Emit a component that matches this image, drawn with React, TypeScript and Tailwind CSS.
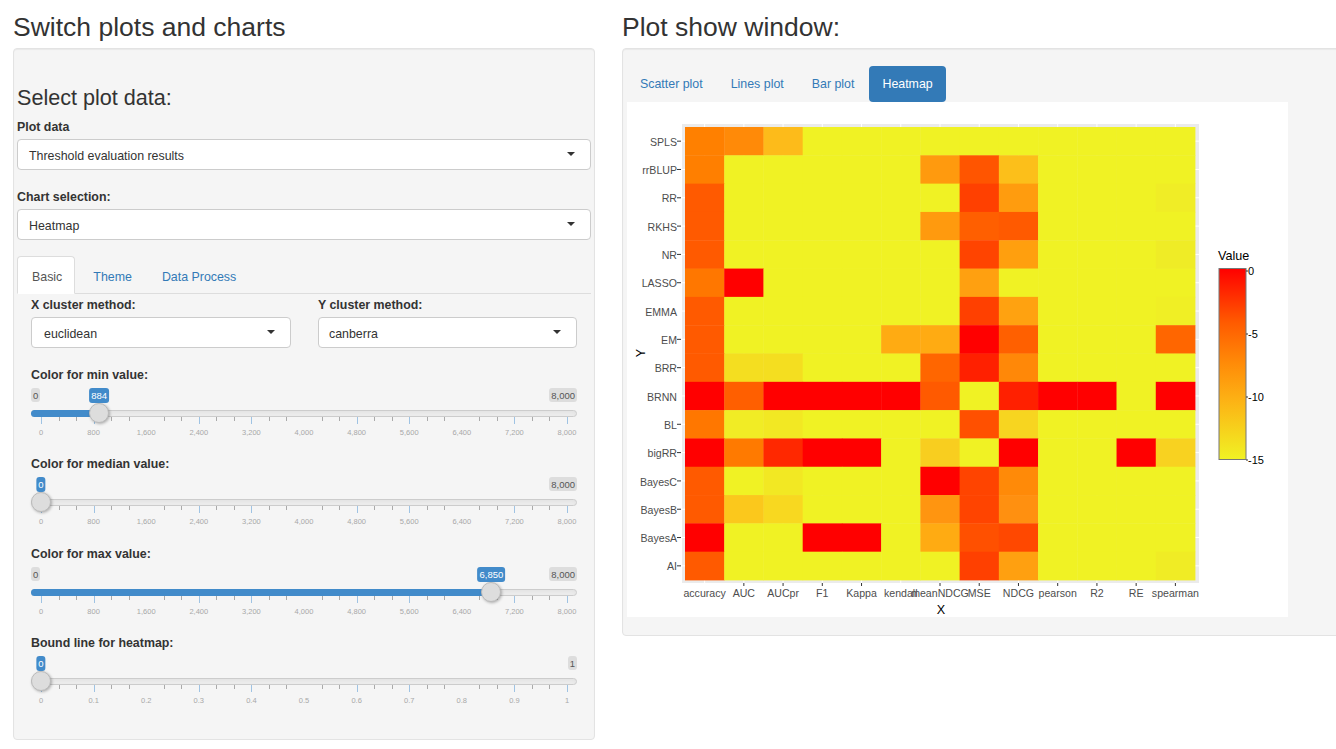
const Y = '#f0f224';
const R = '#ff0000';
const A = '#ff5a00';

const xLabels = ['accuracy', 'AUC', 'AUCpr', 'F1', 'Kappa', 'kendall', 'meanNDCG', 'MSE', 'NDCG', 'pearson', 'R2', 'RE', 'spearman'];

// one row per method, top to bottom; a cell not listed is the yellow base colour
const rows: { name: string; tick: boolean; cells: Record<number, string> }[] = [
  { name: 'SPLS', tick: true, cells: { 0: '#ff8000', 1: '#ff8a08', 2: '#fdbb1a' } },
  { name: 'rrBLUP', tick: true, cells: { 0: '#ff7f00', 6: '#ff9a0e', 7: '#ff5500', 8: '#fcbf1a' } },
  { name: 'RR', tick: true, cells: { 0: A, 7: '#ff4000', 8: '#ff9c0e', 12: '#f0ed26' } },
  { name: 'RKHS', tick: true, cells: { 0: A, 6: '#ff9a0e', 7: '#ff5f00', 8: A } },
  { name: 'NR', tick: true, cells: { 0: A, 7: '#ff4400', 8: '#ff9f0e', 12: '#efec26' } },
  { name: 'LASSO', tick: true, cells: { 0: '#ff7700', 1: R, 7: '#ffa010' } },
  { name: 'EMMA', tick: false, cells: { 0: A, 7: '#ff4000', 8: '#ffa210', 12: '#f0ef25' } },
  { name: 'EM', tick: true, cells: { 0: A, 5: '#ffab12', 6: '#ffab12', 7: R, 8: '#ff6000', 12: '#ff6600' } },
  { name: 'BRR', tick: true, cells: { 0: A, 1: '#f4de20', 2: '#f4de20', 6: '#ff6600', 7: '#ff2000', 8: '#ff8808' } },
  { name: 'BRNN', tick: false, cells: { 0: R, 1: '#ff5f00', 2: R, 3: R, 4: R, 5: R, 6: A, 8: '#ff2000', 9: R, 10: R, 12: R } },
  { name: 'BL', tick: true, cells: { 0: '#ff7700', 1: '#f1ec25', 2: '#f2e823', 7: '#ff5000', 8: '#f7d520' } },
  { name: 'bigRR', tick: true, cells: { 0: R, 1: '#ff7a00', 2: '#ff2800', 3: R, 4: R, 6: '#f8ce1f', 8: R, 11: R, 12: '#f8d220' } },
  { name: 'BayesC', tick: true, cells: { 0: A, 2: '#f2e823', 6: R, 7: '#ff4400', 8: '#ff8a08' } },
  { name: 'BayesB', tick: true, cells: { 0: A, 1: '#fbc81c', 2: '#f8d820', 6: '#ff9510', 7: '#ff4400', 8: '#ff9010' } },
  { name: 'BayesA', tick: true, cells: { 0: R, 3: R, 4: R, 6: '#ffab12', 7: '#ff5000', 8: '#ff4800' } },
  { name: 'AI', tick: true, cells: { 0: A, 7: '#ff4000', 8: '#ffa010', 12: '#f0ec25' } },
];

const left = 685;
const top = 127;
const colW = 510 / 13;
const rowH = 453 / 16;

function Heatmap() {
  return (
    <svg width={661} height={515} viewBox="627 102 661 515" className="block" fontFamily="'Liberation Sans', sans-serif">
      <defs>
        <linearGradient id="legend" x1="0" y1="0" x2="0" y2="1">
          <stop offset="0" stopColor="#ff0000" />
          <stop offset="0.28" stopColor="#ff5a00" />
          <stop offset="0.5" stopColor="#ff8c08" />
          <stop offset="0.68" stopColor="#fdb014" />
          <stop offset="1" stopColor="#f0f224" />
        </linearGradient>
      </defs>

      <rect x={682} y={124} width={517} height={459} fill="#ebebeb" />
      {xLabels.map((_, i) => (
        <line key={i} x1={left + colW * (i + 0.5)} x2={left + colW * (i + 0.5)} y1={124} y2={583} stroke="#fff" />
      ))}
      {rows.map((r, i) => (
        <line key={r.name} x1={682} x2={1199} y1={top + rowH * (i + 0.5)} y2={top + rowH * (i + 0.5)} stroke="#fff" />
      ))}

      {rows.map((r, ri) =>
        xLabels.map((_, ci) => (
          <rect
            key={ci}
            x={left + colW * ci}
            y={top + rowH * ri}
            width={colW + 0.4}
            height={rowH + 0.4}
            fill={r.cells[ci] ?? Y}
          />
        )),
      )}

      {rows.map((r, i) => {
        const y = top + rowH * (i + 0.5);
        return (
          <g key={r.name}>
            <text x={677} y={y + 4.6} textAnchor="end" fontSize={10.6} fill="#4d4d4d">
              {r.name}
            </text>
            {r.tick && <line x1={677} x2={681} y1={y} y2={y} stroke="#333" />}
          </g>
        );
      })}

      {xLabels.map((l, i) => {
        const x = left + colW * (i + 0.5);
        return (
          <g key={l}>
            <text x={x} y={597} textAnchor="middle" fontSize={10.6} fill="#4d4d4d">
              {l}
            </text>
            {l !== 'accuracy' && l !== 'kendall' && <line x1={x} x2={x} y1={583} y2={586} stroke="#333" />}
          </g>
        );
      })}

      <text x={941} y={614} textAnchor="middle" fontSize={12.6} fill="#000">
        X
      </text>
      <text transform="translate(645 353) rotate(-90)" textAnchor="middle" fontSize={12.6} fill="#000">
        Y
      </text>

      <text x={1218} y={260} fontSize={12.6} fill="#000">
        Value
      </text>
      <rect x={1219} y={268.5} width={27} height={191} fill="url(#legend)" stroke="#777" />
      {[
        ['0', 271],
        ['-5', 334],
        ['-10', 397],
        ['-15', 460],
      ].map(([t, y]) => (
        <g key={t}>
          <line x1={1246} x2={1248} y1={Number(y)} y2={Number(y)} stroke="#333" />
          <text x={1248} y={Number(y) + 4} fontSize={11} fill="#000">
            {t}
          </text>
        </g>
      ))}
    </svg>
  );
}

function Select({ value, className }: { value: string; className: string }) {
  return (
    <div className={`flex items-center justify-between bg-white border border-[#cccccc] rounded-[4px] pr-[15px] h-[31px] text-[12.4px] text-[#333] ${className}`}>
      <span className="pt-[4px]">{value}</span>
      <span className="w-0 h-0 border-x-[4.5px] border-x-transparent border-t-[4.5px] border-t-[#333] -mt-[2px]" />
    </div>
  );
}

function Slider({ label, value, min, max, ticks }: { label: string; value: number; min: string; max: string; ticks: string[] }) {
  const span = 526;
  const handleX = 10 + (value / 8000) * span;
  const valueText = value.toLocaleString('en-US');
  // 30 divisions: two short ticks between labelled positions
  const minor = Array.from({ length: 31 }, (_, i) => i).filter((i) => i % 3 !== 0);

  return (
    <div className="h-[89.3px]">
      <div className="h-[22px] text-[12.4px] leading-[18px] font-bold text-[#333]">{label}</div>
      <div className="relative h-[67.3px] text-[9.5px] leading-[15px]">
        {value > 0 && (
          <span className="absolute left-0 top-0 px-[2px] h-[14px] rounded-[3px] bg-[#dddddd] text-[#555]">{min}</span>
        )}
        <span className="absolute right-0 top-0 px-[2px] h-[14px] rounded-[3px] bg-[#dddddd] text-[#555]">{max}</span>
        <span
          className="absolute top-0 -translate-x-1/2 px-[2px] h-[15px] rounded-[3px] bg-[#428bca] text-white z-10"
          style={{ left: handleX }}
        >
          {valueText}
        </span>

        <div className="absolute left-0 right-0 top-[22px] h-[7px] rounded-full bg-[#eeeeee] border border-[#cccccc] shadow-inner" />
        {value > 0 && (
          <div className="absolute left-0 top-[22px] h-[7px] rounded-l-full bg-[#428bca]" style={{ width: handleX }} />
        )}

        {minor.map((i) => (
          <span key={i} className="absolute top-[29px] w-px h-[4px] bg-[#aaaaaa]" style={{ left: 10 + (i * span) / 30 }} />
        ))}
        {ticks.map(
          (t, i) =>
            i % 3 !== 2 && (
              <span key={t} className="absolute top-[29px] w-px h-[7px] bg-[#9fc3e3]" style={{ left: 10 + (i * span) / 10 }} />
            ),
        )}
        {ticks.map((t, i) => (
          <span
            key={t}
            className="absolute top-[39px] -translate-x-1/2 text-[7.5px] leading-[12px] text-[#a8a8a8]"
            style={{ left: 10 + (i * span) / 10 }}
          >
            {t}
          </span>
        ))}

        <span
          className="absolute top-[15px] -translate-x-1/2 size-[20px] rounded-full bg-[#dddddd] border border-[#bbbbbb] shadow-[1px_1px_3px_rgba(0,0,0,0.3)]"
          style={{ left: handleX }}
        />
      </div>
    </div>
  );
}

const thousands = ['0', '800', '1,600', '2,400', '3,200', '4,000', '4,800', '5,600', '6,400', '7,200', '8,000'];
const fractions = ['0', '0.1', '0.2', '0.3', '0.4', '0.5', '0.6', '0.7', '0.8', '0.9', '1'];

export default function App() {
  return (
    <div className="flex w-[1336px] h-[749px] overflow-hidden bg-white text-[#333] font-['Liberation_Sans',sans-serif]">
      {/* Left column */}
      <div className="ml-[13px] w-[582px] shrink-0">
        <h2 className="h-[48px] pt-[10px] text-[26.5px] leading-[34px] font-normal">Switch plots and charts</h2>
        <div className="h-[692px] bg-[#f5f5f5] border border-[#e3e3e3] rounded-[4px] pl-[3px] pr-[3px] shadow-[inset_0_1px_1px_rgba(0,0,0,0.05)]">
          <h3 className="mt-[36px] h-[33px] text-[21.6px] leading-[26px] font-normal">Select plot data:</h3>

          <label className="block h-[21px] text-[12.4px] leading-[18px] font-bold">Plot data</label>
          <Select value="Threshold evaluation results" className="pl-[11px]" />

          <label className="block mt-[18px] h-[21px] text-[12.4px] leading-[18px] font-bold">Chart selection:</label>
          <Select value="Heatmap" className="pl-[11px]" />

          <div className="mt-[16px] flex h-[38px] border-b border-[#dddddd] text-[12.4px] text-[#337ab7]">
            <div className="flex items-center h-[38px] pt-[4px] pl-[14px] pr-[12px] bg-white border border-[#dddddd] border-b-white rounded-t-[4px] text-[#555]">Basic</div>
            <div className="flex items-center pt-[6px] pl-[18px] pr-[16px]">Theme</div>
            <div className="flex items-center pt-[6px] pl-[14px]">Data Process</div>
          </div>

          <div className="px-[14px] pt-[2px]">
            <div className="flex gap-[27px] h-[70px]">
              <div className="w-[260px]">
                <label className="block h-[21px] text-[12.4px] leading-[18px] font-bold">X cluster method:</label>
                <Select value="euclidean" className="pl-[12px]" />
              </div>
              <div className="w-[259px]">
                <label className="block h-[21px] text-[12.4px] leading-[18px] font-bold">Y cluster method:</label>
                <Select value="canberra" className="pl-[10px]" />
              </div>
            </div>
            <Slider label="Color for min value:" value={884} min="0" max="8,000" ticks={thousands} />
            <Slider label="Color for median value:" value={0} min="0" max="8,000" ticks={thousands} />
            <Slider label="Color for max value:" value={6850} min="0" max="8,000" ticks={thousands} />
            <Slider label="Bound line for heatmap:" value={0} min="0" max="1" ticks={fractions} />
          </div>
        </div>
      </div>

      {/* Right column */}
      <div className="ml-[27px] w-[730px] shrink-0">
        <h2 className="h-[48px] pt-[10px] text-[26.5px] leading-[34px] font-normal">Plot show window:</h2>
        <div className="h-[588px] bg-[#f5f5f5] border border-[#e3e3e3] rounded-[4px] pl-[4px] pt-[17px] shadow-[inset_0_1px_1px_rgba(0,0,0,0.05)]">
          <div className="flex gap-[2px] h-[36px] text-[12.4px] text-[#337ab7]">
            <div className="flex items-center px-[13px]">Scatter plot</div>
            <div className="flex items-center px-[13px]">Lines plot</div>
            <div className="flex items-center px-[13px]">Bar plot</div>
            <div className="flex items-center px-[13px] rounded-[4px] bg-[#337ab7] text-white">Heatmap</div>
          </div>
          <div className="w-[661px] h-[515px] bg-white">
            <Heatmap />
          </div>
        </div>
      </div>
    </div>
  );
}
